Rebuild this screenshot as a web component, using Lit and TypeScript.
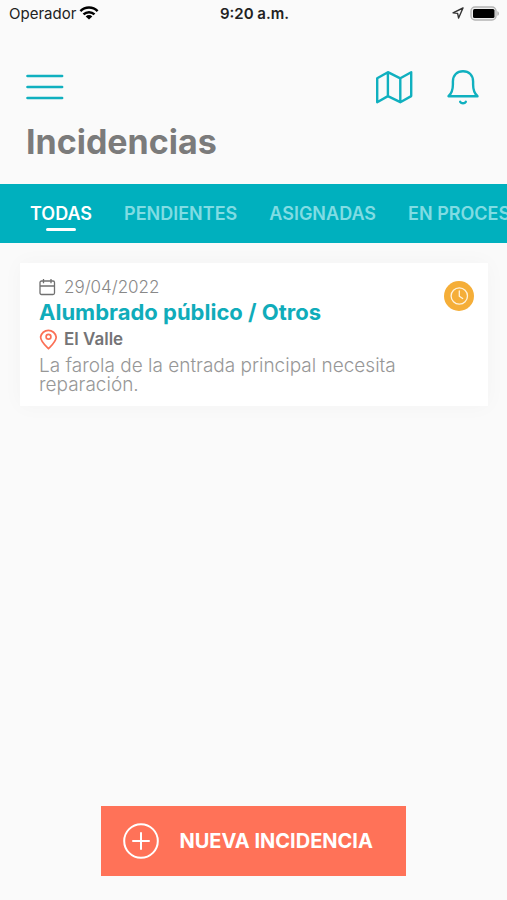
import { LitElement, html, css } from "lit";
import { customElement, property, state } from "lit/decorators.js";
import { classMap } from "lit/directives/class-map.js";

interface Incident {
  date: string;
  category: string;
  place: string;
  description: string;
}

const wifiIcon = html`<svg width="20" height="14" viewBox="0 0 20 14" aria-hidden="true" fill="none" stroke="#000" stroke-width="2.5">
  <path d="M1.4 5.1a12.3 12.3 0 0 1 17.2 0M4.5 8.4a7.9 7.9 0 0 1 11 0"/>
  <path d="M10 13.6 6.7 10.4a4.7 4.7 0 0 1 6.6 0z" fill="#000" stroke="none"/>
</svg>`;

const locationIcon = html`<svg width="12" height="12" viewBox="0 0 12 12" aria-hidden="true" fill="none" stroke="#333" stroke-width="1.4" stroke-linejoin="round">
  <path d="M11 1 1 5.8l4.6.6L6.6 11z"/>
</svg>`;

const batteryIcon = html`<svg width="30" height="15" viewBox="0 0 30 15" aria-hidden="true">
  <rect x="1" y="1" width="25" height="13" rx="4" fill="#eee" stroke="#b4b4b4" stroke-width="1.4"/>
  <rect x="3" y="3" width="21.5" height="9" rx="1.5" fill="#000"/>
  <path d="M27.4 5.2c2 .7 2 3.9 0 4.6z" fill="#aaa"/>
</svg>`;

const menuIcon = html`<svg width="38" height="28" viewBox="0 0 38 28" aria-hidden="true" stroke="#10b0bf" stroke-width="2.6" stroke-linecap="round">
  <path d="M1.5 3h34.6M1.5 14h34.6M1.5 25h34.6"/>
</svg>`;

const mapIcon = html`<svg width="38" height="34" viewBox="0 0 38 34" aria-hidden="true" fill="none" stroke="#10b0bf" stroke-width="2.4" stroke-linejoin="round">
  <path d="M2.2 8.3 12.9 2.2l12.4 6.1 10.9-6.1v23.9l-10.9 6.1-12.4-6.1-10.7 6.1zM12.9 2.2v23.9M25.3 8.3v23.9"/>
</svg>`;

const bellIcon = html`<svg width="34" height="36" viewBox="0 0 34 36" aria-hidden="true" fill="none" stroke="#10b0bf" stroke-width="2.4" stroke-linejoin="round" stroke-linecap="round">
  <path d="M2.5 27.2h29c-3.3-2.9-4.4-6.7-4.4-11.7v-3C27.1 6.3 23 2.2 17 2.2S6.900 6.300 6.900 12.500v3c0 5-1.100 8.800-4.400 11.700z"/>
  <path d="M14.200 32.800c1.200 1.900 4.400 1.900 5.600 0"/>
</svg>`;

const calendarIcon = html`<svg width="18" height="18" viewBox="0 0 18 18" aria-hidden="true" fill="none" stroke="#707070" stroke-width="1.3">
  <rect x="1" y="3" width="14.5" height="13.5" rx="1.500"/>
  <path d="M1 8H15.500M4.500 1v4.200M12 1v4.200"/>
</svg>`;

const pinIcon = html`<svg width="18" height="22" viewBox="0 0 18 22" aria-hidden="true" fill="none" stroke="#fb7056" stroke-width="1.7">
  <path d="M9.500 20.600C6.500 17.600 1.600 13.600 1.600 9a7.900 7.900 0 0 1 15.600 0c0 4.600-4.700 8.600-7.700 11.600z"/>
  <circle cx="9.500" cy="8.800" r="2.400"/>
</svg>`;

const clockIcon = html`<svg width="30" height="30" viewBox="0 0 30 30" aria-hidden="true" fill="none" stroke="#fff3dc" stroke-width="1.3" stroke-linecap="round" stroke-linejoin="round">
  <circle cx="15" cy="15" r="15" fill="#f5ae38" stroke="none"/>
  <circle cx="15.300" cy="15" r="8.200"/>
  <path d="M15.300 10v5.300l3.400 2.200"/>
</svg>`;

const plusIcon = html`<svg width="36" height="36" viewBox="0 0 36 36" aria-hidden="true" fill="none" stroke="#fff" stroke-width="2" stroke-linecap="round">
  <circle cx="18" cy="18" r="16.800"/>
  <path d="M18 10v16M10 18h16"/>
</svg>`;

@customElement("incident-card")
export class IncidentCard extends LitElement {
  @property({ attribute: false }) incident!: Incident;

  static styles = css`
    :host { display: block; }
    .card {
      display: flex;
      justify-content: space-between;
      background: #fff;
      padding: 14px 14px 12px 19px;
      box-shadow: 0 0 20px rgba(0, 0, 0, 0.03);
      color: #979797;
    }
    .body { max-width: 376px; }
    svg { display: block; flex: none; }
    .row { display: flex; align-items: center; gap: 7px; }
    .date { font-size: 17px; line-height: 20px; font-weight: 300; color: #888; }
    .title { margin: 0; font-size: 22px; line-height: 30px; font-weight: 700; color: #10acba; }
    .place { font-size: 17px; line-height: 24px; font-weight: 600; color: #747476; }
    .text { margin: 5px 0 0; font-size: 19px; line-height: 19px; font-weight: 300; }
    .status { margin-top: 4px; }
  `;

  render() {
    const i = this.incident;
    return html`<article class="card">
      <div class="body">
        <div class="row date">${calendarIcon}<time>${i.date}</time></div>
        <h2 class="title">${i.category}</h2>
        <div class="row place">${pinIcon}<span>${i.place}</span></div>
        <p class="text">${i.description}</p>
      </div>
      <div class="status" role="img" aria-label="Pendiente">${clockIcon}</div>
    </article>`;
  }
}

@customElement("app-root")
export class AppRoot extends LitElement {
  @state() private active = 0;

  private tabs = ["TODAS", "PENDIENTES", "ASIGNADAS", "EN PROCESO"];

  private incidents: Incident[] = [
    {
      date: "29/04/2022",
      category: "Alumbrado público / Otros",
      place: "El Valle",
      description: "La farola de la entrada principal necesita reparación.",
    },
  ];

  static styles = css`
    :host {
      display: flex;
      flex-direction: column;
      min-height: 100vh;
      background: #fafafa;
      font-family: Inter, "Open Sans", sans-serif;
    }
    svg { display: block; flex: none; }
    button {
      border: 0;
      padding: 0;
      background: none;
      font: inherit;
      color: inherit;
      cursor: pointer;
    }
    .statusbar {
      display: grid;
      grid-template-columns: 1fr auto 1fr;
      align-items: center;
      height: 26px;
      padding: 0 7px 0 9px;
      font-size: 15px;
      color: #222;
    }
    .carrier { display: flex; align-items: center; gap: 3px; }
    .clock { font-weight: 600; }
    .system { display: flex; align-items: center; justify-content: flex-end; gap: 6px; }
    .header { padding: 42px 27px 20px 26px; }
    .toolbar { display: flex; align-items: center; justify-content: space-between; height: 38px; }
    .actions { display: flex; align-items: center; gap: 33px; }
    .heading { margin: 14px 0 0; font-size: 34px; line-height: 44px; font-weight: 700; color: #7b7b7b; }
    .tabs {
      display: flex;
      gap: 32px;
      height: 59px;
      padding: 0 30px;
      overflow: hidden;
      background: #00b0be;
      font-size: 18px;
      font-weight: 600;
      color: #80dce3;
    }
    .tab {
      position: relative;
      flex: none;
      white-space: nowrap;
    }
    .selected { color: #fff; }
    .selected::after {
      content: "";
      position: absolute;
      left: 50%;
      bottom: 12px;
      width: 30px;
      height: 3px;
      margin-left: -15px;
      border-radius: 2px;
      background: #fff;
    }
    .list { flex: 1; display: grid; align-content: start; gap: 16px; padding: 20px 19px 20px 20px; }
    .footer { display: flex; justify-content: center; padding: 0 0 24px; }
    .create {
      display: flex;
      align-items: center;
      gap: 20px;
      width: 60%;
      height: 70px;
      padding: 0 22px;
      background: #ff7258;
      font-size: 20px;
      font-weight: 700;
      color: #fff;
      white-space: nowrap;
    }
  `;

  render() {
    return html`
      <div class="statusbar">
        <div class="carrier"><span>Operador</span>${wifiIcon}</div>
        <span class="clock">9:20 a.m.</span>
        <div class="system">${locationIcon}${batteryIcon}</div>
      </div>
      <header class="header">
        <div class="toolbar">
          <button aria-label="Menú">${menuIcon}</button>
          <div class="actions">
            <button aria-label="Mapa">${mapIcon}</button>
            <button aria-label="Notificaciones">${bellIcon}</button>
          </div>
        </div>
        <h1 class="heading">Incidencias</h1>
      </header>
      <nav class="tabs" role="tablist">
        ${this.tabs.map(
          (label, n) => html`<button
            role="tab"
            aria-selected=${n === this.active ? "true" : "false"}
            class=${classMap({ tab: true, selected: n === this.active })}
            @click=${() => (this.active = n)}
          >${label}</button>`
        )}
      </nav>
      <main class="list">
        ${this.incidents.map((i) => html`<incident-card .incident=${i}></incident-card>`)}
      </main>
      <footer class="footer">
        <button class="create">${plusIcon}<span>NUEVA INCIDENCIA</span></button>
      </footer>
    `;
  }
}
